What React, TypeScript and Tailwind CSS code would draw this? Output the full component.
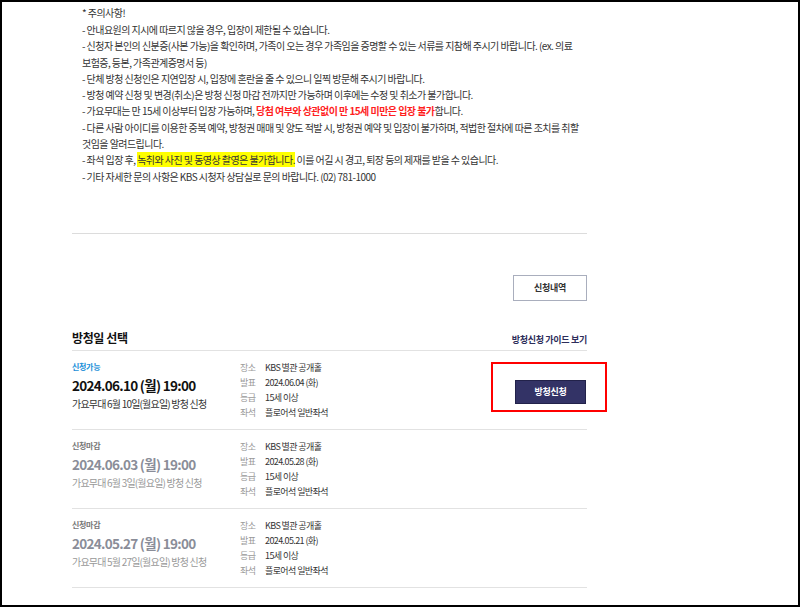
import React from "react";

const font = { fontFamily: '"Noto Sans CJK KR", "Noto Sans", sans-serif' };

function InfoCol({ date }: { date: string }) {
  const rows: [string, string][] = [
    ["장소", "KBS 별관 공개홀"],
    ["발표", date],
    ["등급", "15세 이상"],
    ["좌석", "플로어석 일반좌석"],
  ];
  return (
    <div className="flex flex-col mt-[-1px]">
      {rows.map(([k, v]) => (
        <div key={k} className="flex h-[15px] items-center text-[9px] leading-none tracking-[-0.6px]">
          <span className="w-[25px] text-[#999]">{k}</span>
          <span className="text-[#333]">{v}</span>
        </div>
      ))}
    </div>
  );
}

function Row({
  open,
  date,
  title,
  notice,
}: {
  open: boolean;
  date: string;
  title: string;
  notice: string;
}) {
  return (
    <div className="flex items-start border-b border-[#e2e2e2] h-[79px] pt-[10px]">
      <div className="w-[168px] flex flex-col">
        <div className={`text-[8px] leading-[12px] font-bold tracking-[-0.3px] ${open ? "text-[#1a8fd8]" : "text-[#777]"}`}>
          {open ? "신청가능" : "신청마감"}
        </div>
        <div className={`mt-[2px] text-[13.5px] leading-[20px] font-bold tracking-[-0.7px] ${open ? "text-[#111]" : "text-[#8a8d98]"}`}>
          {date}
        </div>
        <div className={`mt-[1px] text-[10px] leading-[16px] tracking-[-0.8px] ${open ? "text-[#333]" : "text-[#999]"}`}>
          {title}
        </div>
      </div>
      <InfoCol date={notice} />
      <div className="flex-1" />
      {open && (
        <div className="relative mt-[15px] mr-[1px]">
          <div className="absolute left-[-24px] top-[-14px] w-[116px] h-[50px] border-2 border-[#ff0000]" />
          <button className="w-[71px] h-[24px] bg-[#333366] text-white text-[9px] font-bold tracking-[-0.3px] border border-[#22224a]">
            방청신청
          </button>
        </div>
      )}
    </div>
  );
}

export default function App() {
  const lines: React.ReactNode[] = [
    <>- 안내요원의 지시에 따르지 않을 경우, 입장이 제한될 수 있습니다.</>,
    <>- 신청자 본인의 신분증(사본 가능)을 확인하며, 가족이 오는 경우 가족임을 증명할 수 있는 서류를 지참해 주시기 바랍니다. (ex. 의료</>,
    <>보험증, 등본, 가족관계증명서 등)</>,
    <>- 단체 방청 신청인은 지연입장 시, 입장에 혼란을 줄 수 있으니 일찍 방문해 주시기 바랍니다.</>,
    <>- 방청 예약 신청 및 변경(취소)은 방청 신청 마감 전까지만 가능하며 이후에는 수정 및 취소가 불가합니다.</>,
    <>
      - 가요무대는 만 15세 이상부터 입장 가능하며, <span className="text-[#ff1e1e] font-bold">당첨 여부와 상관없이 만 15세 미만은 입장 불가</span>합니다.
    </>,
    <>- 다른 사람 아이디를 이용한 중복 예약, 방청권 매매 및 양도 적발 시, 방청권 예약 및 입장이 불가하며, 적법한 절차에 따른 조치를 취할</>,
    <>것임을 알려드립니다.</>,
    <>
      - 좌석 입장 후, <span className="bg-[#ffff00]">녹취와 사진 및 동영상 촬영은 불가합니다.</span> 이를 어길 시 경고, 퇴장 등의 제재를 받을 수 있습니다.
    </>,
    <>- 기타 자세한 문의 사항은 KBS 시청자 상담실로 문의 바랍니다. (02) 781-1000</>,
  ];
  return (
    <div style={font} className="w-[800px] h-[607px] border-2 border-black bg-white overflow-hidden box-border">
      <div className="w-[515px] ml-[70px]">
        <div className="pl-[10px] pt-[1px] text-[10px] text-[#333] tracking-[-0.55px]">
          <div className="h-[19px] leading-[19px]">* 주의사항!</div>
          {lines.map((l, i) => (
            <div key={i} className="h-[16.3px] leading-[16.3px] whitespace-nowrap">
              {l}
            </div>
          ))}
        </div>
        <div className="mt-[48px] border-t border-[#dcdcdc]" />
        <div className="flex justify-end mt-[41px]">
          <button className="w-[74px] h-[26px] border border-[#a9aebd] text-[9px] font-bold text-[#333] tracking-[-0.3px] bg-white">
            신청내역
          </button>
        </div>
        <div className="flex items-end justify-between mt-[28px] pb-[3px] border-b border-[#e2e2e2]">
          <div className="text-[12px] font-bold text-[#111] tracking-[-0.4px] leading-[18px]">방청일 선택</div>
          <div className="text-[9px] font-bold text-[#2d2d5a] tracking-[-0.3px] leading-[14px]">방청신청 가이드 보기</div>
        </div>
        <Row open date="2024.06.10 (월) 19:00" title="가요무대 6월 10일(월요일) 방청 신청" notice="2024.06.04 (화)" />
        <Row open={false} date="2024.06.03 (월) 19:00" title="가요무대 6월 3일(월요일) 방청 신청" notice="2024.05.28 (화)" />
        <Row open={false} date="2024.05.27 (월) 19:00" title="가요무대 5월 27일(월요일) 방청 신청" notice="2024.05.21 (화)" />
      </div>
    </div>
  );
}
